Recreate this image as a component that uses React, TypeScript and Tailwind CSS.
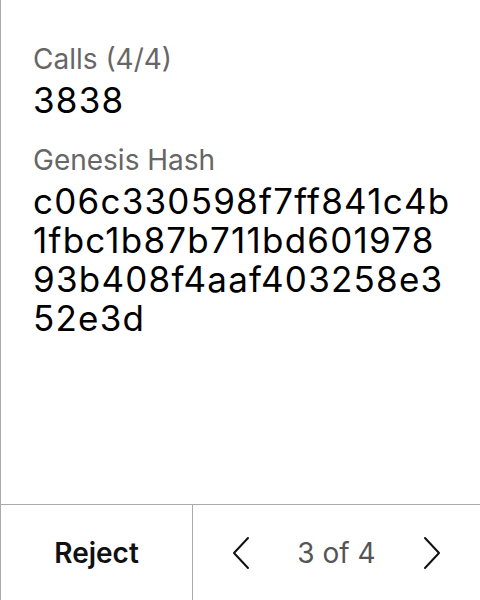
import React from "react";

type FieldProps = {
  label: string;
  value: string;
};

function Field({ label, value }: FieldProps) {
  return (
    <div className="flex flex-col">
      <span className="text-[28px] leading-[36px] text-[#666666]">{label}</span>
      <span className="mt-[4px] break-all text-[35px] leading-[39px] tracking-[0.035em] text-black">
        {value}
      </span>
    </div>
  );
}

function Chevron({ dir }: { dir: "left" | "right" }) {
  return (
    <svg width="18" height="34" viewBox="0 0 18 34" fill="none" aria-hidden="true">
      <path
        d={dir === "left" ? "M16 2 L2 17 L16 32" : "M2 2 L16 17 L2 32"}
        stroke="#111111"
        strokeWidth="2"
        strokeLinecap="round"
        strokeLinejoin="round"
      />
    </svg>
  );
}

export default function App() {
  return (
    <div
      className="flex h-screen flex-col border-l border-[#aaaaaa] bg-white"
      style={{ fontFamily: "Inter, 'Noto Sans', sans-serif" }}
    >
      <div className="flex flex-1 flex-col gap-[22px] pl-[32px] pr-[24px] pt-[41px]">
        <Field label="Calls (4/4)" value="3838" />
        <Field
          label="Genesis Hash"
          value="c06c330598f7ff841c4b1fbc1b87b711bd60197893b408f4aaf403258e352e3d"
        />
      </div>
      <div className="grid h-[96px] grid-cols-[192px_1fr] border-t border-[#aaaaaa]">
        <button className="flex items-center justify-center border-r border-[#aaaaaa] text-[28px] font-semibold text-[#111111]">
          Reject
        </button>
        <div className="flex items-center justify-center gap-[47px]">
          <Chevron dir="left" />
          <span className="text-[28px] text-[#555555]">3 of 4</span>
          <Chevron dir="right" />
        </div>
      </div>
    </div>
  );
}
